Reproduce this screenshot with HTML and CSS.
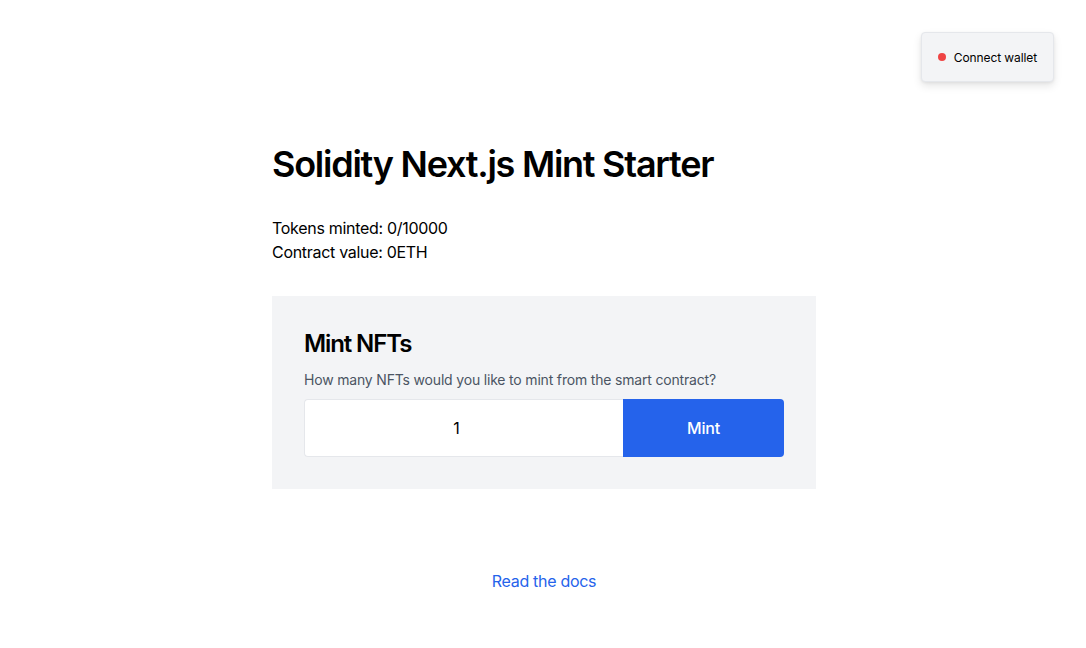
FILE: index.html
```html
<!DOCTYPE html>
<html lang="en">
<head>
<meta charset="utf-8">
<title>Solidity Next.js Mint Starter</title>
<link rel="stylesheet" href="styles.css">
</head>
<body>
<header class="topbar">
  <button class="wallet-btn"><span class="dot"></span>Connect wallet</button>
</header>
<main class="container">
  <h1 class="title">Solidity Next.js Mint Starter</h1>
  <div class="stats">
    <p>Tokens minted: 0/10000</p>
    <p>Contract value: 0ETH</p>
  </div>
  <section class="mint-card">
    <h2 class="mint-title">Mint NFTs</h2>
    <p class="mint-desc">How many NFTs would you like to mint from the smart contract?</p>
    <div class="mint-row">
      <input class="mint-input" type="text" value="1">
      <button class="mint-btn">Mint</button>
    </div>
  </section>
  <footer class="footer">
    <a class="docs-link" href="#">Read the docs</a>
  </footer>
</main>
</body>
</html>
```
FILE: styles.css
```css
* { box-sizing: border-box; }
html, body { margin: 0; padding: 0; }
body {
  font-family: Inter, "Noto Sans", sans-serif;
  color: #000;
  background: #fff;
}
.topbar {
  display: flex;
  justify-content: flex-end;
  padding: 32px 32px 0 0;
  height: 32px;
  overflow: visible;
}
.wallet-btn {
  display: flex;
  align-items: center;
  gap: 8px;
  height: 50px;
  padding: 0 16px;
  background: #f3f4f6;
  border: 1px solid #e5e7eb;
  border-radius: 4px;
  box-shadow: 0 4px 8px rgba(0,0,0,0.10), 0 1px 3px rgba(0,0,0,0.06);
  font-family: Inter, sans-serif;
  font-size: 12px;
  font-weight: 400;
  letter-spacing: -0.1px;
  color: #000;
}
.dot {
  width: 8px;
  height: 8px;
  border-radius: 50%;
  background: #ef4444;
}
.container {
  width: 544px;
  margin: 0 auto;
  padding-top: 112px;
  transform: translateX(1px);
}
.title {
  margin: 0;
  font-size: 36px;
  line-height: 40px;
  font-weight: 600;
  letter-spacing: -1.25px;
}
.stats {
  margin-top: 32px;
}
.stats p {
  margin: 0;
  font-size: 16px;
  line-height: 24px;
  letter-spacing: -0.3px;
}
.mint-card {
  margin-top: 32px;
  background: #f3f4f6;
  padding: 32px;
}
.mint-title {
  margin: 0;
  font-size: 24px;
  line-height: 32px;
  font-weight: 600;
  letter-spacing: -1.1px;
}
.mint-desc {
  margin: 10px 0 9px;
  font-size: 14px;
  line-height: 20px;
  color: #4b5563;
  letter-spacing: -0.18px;
}
.mint-row {
  display: flex;
  height: 58px;
}
.mint-input {
  flex: 1;
  min-width: 0;
  border: 1px solid #e5e7eb;
  border-right: none;
  border-radius: 4px 0 0 4px;
  background: #fff;
  text-align: center;
  padding: 0 15px 0 0;
  font-family: Inter, sans-serif;
  font-size: 16px;
  color: #000;
  outline: none;
}
.mint-btn {
  width: 161px;
  border: none;
  border-radius: 0 4px 4px 0;
  background: #2563eb;
  color: #fff;
  font-family: Inter, sans-serif;
  font-size: 16px;
  font-weight: 500;
  letter-spacing: -0.2px;
}
.footer {
  margin-top: 80px;
  text-align: center;
}
.docs-link {
  color: #2563eb;
  font-size: 16px;
  line-height: 24px;
  letter-spacing: -0.3px;
  text-decoration: none;
}
```
